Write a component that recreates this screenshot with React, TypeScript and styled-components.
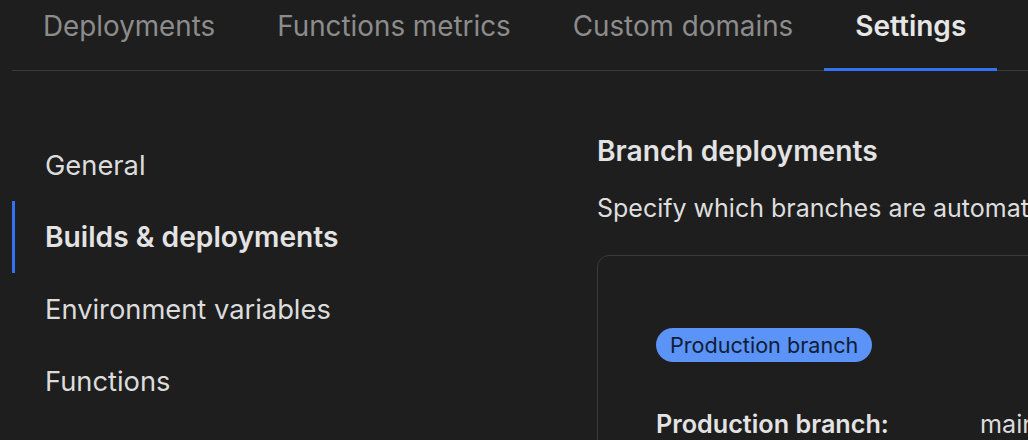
import styled, { createGlobalStyle } from 'styled-components'

const GlobalStyle = createGlobalStyle`
  html, body {
    margin: 0;
    padding: 0;
    background: #1e1e1e;
    overflow: hidden;
  }
  body {
    font-family: Inter, "Noto Sans", "Liberation Sans", sans-serif;
    -webkit-font-smoothing: antialiased;
  }
`

const tabs = ['Deployments', 'Functions metrics', 'Custom domains', 'Settings']
const sections = ['General', 'Builds & deployments', 'Environment variables', 'Functions']

const App = () => {
  return (
    <>
      <GlobalStyle />
      <Page>
        <TabBar>
          {tabs.map((t) => (
            <Tab key={t} $active={t === 'Settings'}>
              {t}
            </Tab>
          ))}
        </TabBar>
        <Body>
          <Sidebar>
            {sections.map((s) => (
              <SideItem key={s} $active={s === 'Builds & deployments'}>
                {s}
              </SideItem>
            ))}
          </Sidebar>
          <Main>
            <Title>Branch deployments</Title>
            <Description>
              Specify which branches are automatically deployed to production and preview environments.
            </Description>
            <Card>
              <Badge>Production branch</Badge>
              <FieldRow>
                <FieldLabel>Production branch:</FieldLabel>
                <FieldValue>main</FieldValue>
              </FieldRow>
            </Card>
          </Main>
        </Body>
      </Page>
    </>
  )
}

const Page = styled.div`
  min-height: 100vh;
  padding-left: 12px;
  background: #1e1e1e;
  color: #e3e3e3;
`

const TabBar = styled.div`
  display: flex;
  height: 70px;
  border-bottom: 1px solid #3a3a3a;
`

const Tab = styled.div<{ $active?: boolean }>`
  display: flex;
  align-items: flex-start;
  padding: 10px 31px 0;
  font-size: ${(p) => (p.$active ? '28px' : '27.8px')};
  line-height: 32px;
  white-space: nowrap;
  font-weight: ${(p) => (p.$active ? 600 : 400)};
  color: ${(p) => (p.$active ? '#e6e6e6' : '#8c8c8c')};
  border-bottom: 3px solid ${(p) => (p.$active ? '#3273f0' : 'transparent')};
  margin-bottom: -1px;
  box-sizing: border-box;
`

const Body = styled.div`
  display: flex;
`

const Sidebar = styled.nav`
  width: 585px;
  flex-shrink: 0;
  padding-top: 58px;
  display: flex;
  flex-direction: column;
`

const SideItem = styled.div<{ $active?: boolean }>`
  height: 72px;
  display: flex;
  align-items: center;
  padding-left: 30px;
  font-size: ${(p) => (p.$active ? '28.2px' : '27.3px')};
  white-space: nowrap;
  border-left: 3px solid ${(p) => (p.$active ? '#3273f0' : 'transparent')};
  font-weight: ${(p) => (p.$active ? 600 : 400)};
  color: ${(p) => (p.$active ? '#e3e3e3' : '#dcdcdc')};
`

const Main = styled.main`
  padding-top: 63px;
  flex-shrink: 0;
`

const Title = styled.h2`
  margin: 0;
  font-size: 28.2px;
  line-height: 34px;
  font-weight: 600;
  color: #e3e3e3;
`

const Description = styled.p`
  margin: 23px 0 0;
  font-size: 25px;
  line-height: 34px;
  white-space: nowrap;
  color: #dedede;
`

const Card = styled.section`
  margin-top: 30px;
  width: 720px;
  padding: 72px 58px;
  border: 1px solid #3a3a3a;
  border-radius: 12px;
`

const Badge = styled.span`
  display: inline-flex;
  align-items: center;
  height: 34px;
  padding: 0 14px;
  border-radius: 17px;
  background: #5b93f7;
  color: #0f1d38;
  font-size: 21.6px;
`

const FieldRow = styled.div`
  display: flex;
  align-items: center;
  margin-top: 47px;
  line-height: 30px;
  font-size: 25.2px;
`

const FieldLabel = styled.span`
  width: 324px;
  font-weight: 600;
  color: #e3e3e3;
`

const FieldValue = styled.span`
  color: #dcdcdc;
`

export default App
